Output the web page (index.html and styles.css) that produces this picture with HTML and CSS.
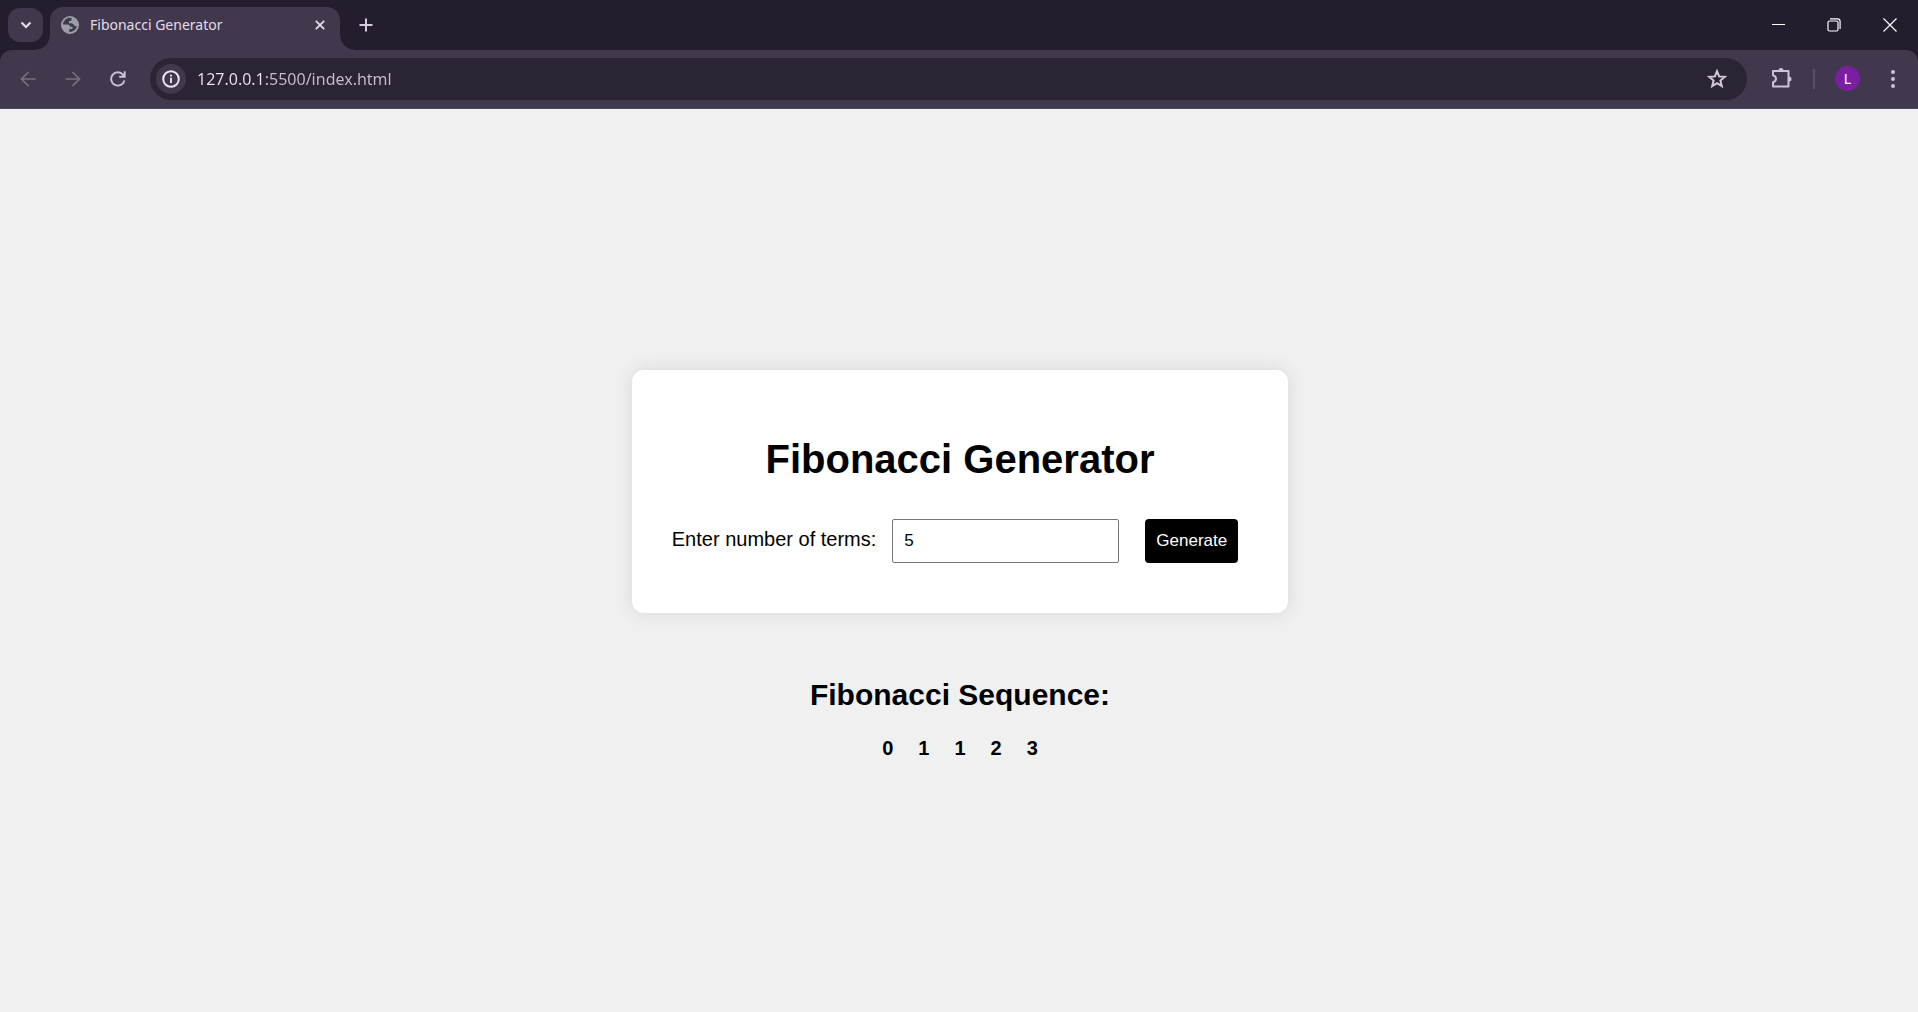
FILE: index.html
```html
<!DOCTYPE html>
<html lang="en">
<head>
<meta charset="utf-8">
<title>Fibonacci Generator</title>
<link rel="stylesheet" href="styles.css">
</head>
<body>
<header class="browser">
  <div class="tab-strip">
    <button class="tab-search" type="button" aria-label="Search tabs">
      <svg width="12" height="8" viewBox="0 0 12 8"><path d="M1.500 1.500 6 6l4.500-4.500" fill="none" stroke="currentColor" stroke-width="2.200"/></svg>
    </button>
    <div class="tab">
      <svg class="globe" width="18" height="18" viewBox="0 0 18 18"><circle cx="9" cy="9" r="9" fill="#9aa0a6"/><path d="M10.500 2A7 7 0 0 0 2 8.500H6.500Q9 8.600 9 10.800H11.500V13H8.300V15.900A7 7 0 0 0 16 9.500Q14.500 11 13.200 9.600 12.600 7.500 10.500 7.300H8V5H10.500Z" fill="#41384d"/></svg>
      <span class="tab-title">Fibonacci Generator</span>
      <button class="tab-close" type="button" aria-label="Close tab">
        <svg width="10" height="10" viewBox="0 0 10 10"><path d="m.8.8 8.400 8.400m0-8.400L.8 9.200" stroke="currentColor" stroke-width="1.800"/></svg>
      </button>
    </div>
    <button class="new-tab" type="button" aria-label="New tab">
      <svg width="14" height="14" viewBox="0 0 14 14"><path d="M7 .5v13M.5 7h13" stroke="currentColor" stroke-width="2"/></svg>
    </button>
    <div class="window-controls">
      <button type="button" aria-label="Minimize"><svg width="13" height="13" viewBox="0 0 13 13"><path d="M0 6.500h13" stroke="currentColor"/></svg></button>
      <button type="button" aria-label="Restore"><svg width="14" height="14" viewBox="0 0 14 14"><rect x="1" y="3" width="10" height="10" rx="1.500" fill="none" stroke="currentColor" stroke-width="1.200"/><path d="M3 .9h7.500a2.600 2.600 0 0 1 2.600 2.600V11" fill="none" stroke="currentColor" stroke-width="1.200"/></svg></button>
      <button type="button" aria-label="Close"><svg width="14" height="14" viewBox="0 0 14 14"><path d="m.5.5 13 13m0-13-13 13" stroke="currentColor" stroke-width="1.200"/></svg></button>
    </div>
  </div>
  <nav class="toolbar" aria-label="Browser toolbar">
    <button class="nav-button" type="button" aria-label="Back" disabled><svg width="16" height="16" viewBox="0 0 16 16"><path d="M15.500 8H2M8.500 1 1.500 8l7 7" fill="none" stroke="currentColor" stroke-width="1.700"/></svg></button>
    <button class="nav-button" type="button" aria-label="Forward" disabled><svg width="16" height="16" viewBox="0 0 16 16"><path d="M.5 8H14M7.500 1l7 7-7 7" fill="none" stroke="currentColor" stroke-width="1.700"/></svg></button>
    <button class="nav-button" type="button" aria-label="Reload"><svg width="16" height="16" viewBox="0 0 16 16"><path d="M14.400 9.500A6.700 6.700 0 1 1 13 3.600L14.200 5M14.700.3v5.500H9.200" fill="none" stroke="currentColor" stroke-width="1.900"/></svg></button>
    <div class="address-bar">
      <button class="site-info" type="button" aria-label="View site information"><svg width="18" height="18" viewBox="0 0 18 18"><circle cx="9" cy="9" r="7.800" fill="none" stroke="currentColor" stroke-width="2"/><path d="M9 7.800v5.200M9 4.700v1.900" stroke="currentColor" stroke-width="1.900"/></svg></button>
      <input class="url" type="text" aria-label="Address" value="127.0.0.1:5500/index.html">
      <button class="bookmark" type="button" aria-label="Bookmark this tab"><svg width="20" height="19" viewBox="0 0 20 19"><path d="m10 2.200 2.100 5.200 5.600.5-4.300 3.700 1.400 5.500-4.800-2.900-4.800 2.900 1.400-5.500-4.300-3.700 5.600-.5Z" fill="none" stroke="currentColor" stroke-width="2"/></svg></button>
    </div>
    <button class="extensions" type="button" aria-label="Extensions"><svg width="21" height="21" viewBox="0 0 21 21"><path d="M2 3h15.500v15.500H2v-4.300c4-1.300 4-5.700 0-7Z" fill="none" stroke="currentColor" stroke-width="2" stroke-linejoin="round"/><path d="M7.500 2.500a2.500 2.500 0 0 1 5 0ZM18 8.500a2.500 2.500 0 0 1 0 5Z" fill="currentColor"/></svg></button>
    <span class="divider"></span>
    <button class="profile" type="button" aria-label="Profile">L</button>
    <button class="menu" type="button" aria-label="Menu"><svg width="4" height="18" viewBox="0 0 4 18"><g fill="currentColor"><circle cx="2" cy="2" r="2"/><circle cx="2" cy="9" r="2"/><circle cx="2" cy="16" r="2"/></g></svg></button>
  </nav>
</header>
<main class="page">
  <section class="card">
    <h1>Fibonacci Generator</h1>
    <form class="terms-form">
      <label for="terms">Enter number of terms:</label>
      <input class="terms" id="terms" type="number" value="5">
      <button class="generate" type="button">Generate</button>
    </form>
  </section>
  <section class="result">
    <h2>Fibonacci Sequence:</h2>
    <div class="sequence"><span>0</span><span>1</span><span>1</span><span>2</span><span>3</span></div>
  </section>
</main>
</body>
</html>
```
FILE: styles.css
```css
* { box-sizing: border-box; }

body {
  display: flex;
  flex-direction: column;
  min-height: 100vh;
  margin: 0;
  background: #f0f0f0;
  color: #000;
  font-family: Arial, "Liberation Sans", sans-serif;
  font-size: 20px;
}

button { font-family: inherit; }
svg { display: block; flex: none; }

/* Browser frame */
.browser {
  background: #241d2e;
  color: #e4dce9;
  font-family: "Segoe UI", "Noto Sans", sans-serif;
}

.browser button {
  display: flex;
  align-items: center;
  justify-content: center;
  flex: none;
  padding: 0;
  border: 0;
  background: none;
  color: inherit;
}

.tab-strip {
  display: flex;
  height: 50px;
  padding: 7px 0 0 8px;
}

.browser .tab-search {
  width: 35px;
  height: 34px;
  margin: 1px 7px 0 0;
  border-radius: 12px;
  background: #41384d;
}

.tab {
  position: relative;
  display: flex;
  align-items: center;
  width: 290px;
  padding: 0 9px 7px 11px;
  border-radius: 13px 13px 0 0;
  background: #41384d;
}

.tab::before,
.tab::after {
  content: "";
  position: absolute;
  bottom: 0;
  width: 14px;
  height: 14px;
}

.tab::before {
  right: 100%;
  background: radial-gradient(circle at 0 0, transparent 13px, #41384d 14px);
}

.tab::after {
  left: 100%;
  background: radial-gradient(circle at 100% 0, transparent 13px, #41384d 14px);
}

.tab-title {
  flex: 1;
  margin-left: 11px;
  font-size: 14px;
  line-height: 20px;
}

.browser .tab-close { width: 22px; height: 22px; }
.browser .new-tab { width: 36px; height: 36px; margin-left: 8px; color: #d5c8e0; }

.window-controls {
  display: flex;
  margin: -7px 0 0 auto;
  color: #fff;
}

.browser .window-controls button { width: 56px; height: 49px; }

.toolbar {
  display: flex;
  align-items: center;
  height: 59px;
  padding: 0 13px 1px 5px;
  border-bottom: 1px solid #51475e;
  border-radius: 12px 12px 0 0;
  background: #41384d;
  color: #cdc2dc;
}

.browser .nav-button { width: 45px; height: 42px; }
.browser .nav-button:disabled { color: #79707f; }

.address-bar {
  display: flex;
  flex: 1;
  align-items: center;
  height: 42px;
  margin-left: 10px;
  padding: 0 20px 0 6px;
  border-radius: 21px;
  background: #2b2435;
}

.browser .site-info {
  width: 30px;
  height: 30px;
  border-radius: 15px;
  background: #41384d;
  color: #ece4f2;
}

.url {
  flex: 1;
  min-width: 0;
  height: 32px;
  margin-left: 11px;
  padding: 0;
  border: 0;
  background: linear-gradient(to right, #ece4f2 67px, #c8bfce 67px);
  background-clip: text;
  color: transparent;
  font-family: inherit;
  font-size: 16px;
}

.browser .bookmark { color: #d2cbd4; }
.browser .extensions { width: 36px; height: 36px; margin-left: 16px; }

.divider {
  width: 2px;
  height: 20px;
  margin: 0 20px 0 14px;
  background: #5b506a;
}

.browser .profile {
  width: 25px;
  height: 25px;
  border-radius: 50%;
  background: #7b1fa2;
  color: #fff;
  font-size: 14px;
}

.browser .menu { width: 24px; height: 36px; margin-left: 21px; }

/* Generator */
.page {
  display: flex;
  flex: 1;
  flex-direction: column;
  align-items: center;
  justify-content: center;
  padding: 8px 0 0 2px;
}

.card {
  padding: 40px;
  border-radius: 12px;
  background: #fff;
  box-shadow: 0 0 19px rgba(0, 0, 0, 0.1);
}

h1 {
  margin: 26px 0 37px;
  font-size: 40px;
  line-height: 46px;
  text-align: center;
}

.terms-form {
  display: flex;
  align-items: baseline;
  margin: 0 10px 10px 0;
}

.terms {
  width: 227px;
  height: 44px;
  margin: 0 26px 0 16px;
  padding: 0 11px;
  border: 1px solid #767676;
  border-radius: 2px;
  background: #fff;
  font-family: inherit;
  font-size: 17px;
}

.generate {
  height: 44px;
  padding: 0 11px;
  border: 0;
  border-radius: 4px;
  background: #000;
  color: #fff;
  font-size: 17px;
}

.result {
  padding-top: 65px;
  text-align: center;
}

h2 {
  margin: 0 0 25px;
  font-size: 30px;
  line-height: 34px;
}

.sequence {
  display: flex;
  gap: 25px;
  justify-content: center;
  font-weight: bold;
  line-height: 23px;
}
```
